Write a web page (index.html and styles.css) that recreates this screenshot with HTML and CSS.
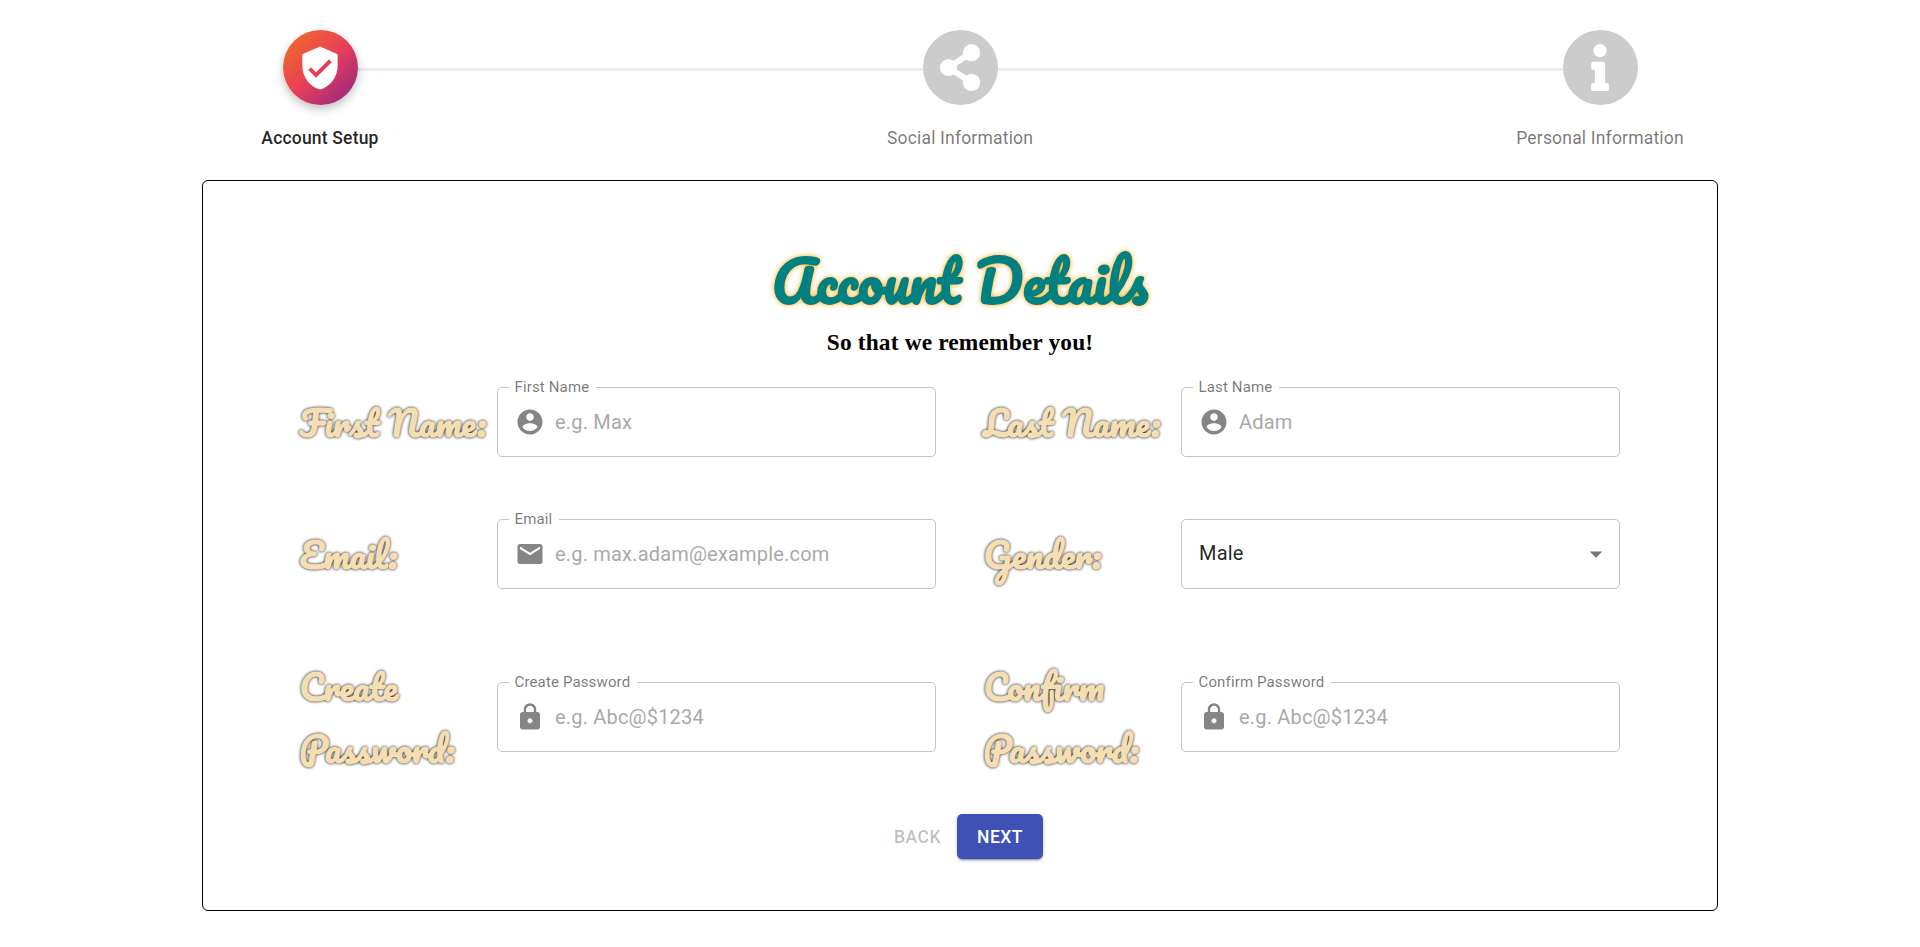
FILE: index.html
```html
<!DOCTYPE html>
<html lang="en">
<head>
<meta charset="utf-8">
<title>Account Setup</title>
<link rel="stylesheet" href="styles.css">
</head>
<body>
<svg class="defs" aria-hidden="true">
  <symbol id="user" viewBox="0 0 24 24"><path d="M12 2C6.48 2 2 6.48 2 12s4.48 10 10 10 10-4.48 10-10S17.52 2 12 2zm0 3c1.66 0 3 1.34 3 3s-1.34 3-3 3-3-1.34-3-3 1.34-3 3-3zm0 14.2c-2.5 0-4.71-1.28-6-3.22.03-1.99 4-3.08 6-3.08 1.99 0 5.97 1.09 6 3.08-1.29 1.94-3.5 3.22-6 3.22z"/></symbol>
  <symbol id="mail" viewBox="0 0 24 24"><path d="M20 4H4c-1.1 0-1.99.9-1.99 2L2 18c0 1.1.9 2 2 2h16c1.1 0 2-.9 2-2V6c0-1.1-.9-2-2-2zm0 4l-8 5-8-5V6l8 5 8-5v2z"/></symbol>
  <symbol id="lock" viewBox="0 0 24 24"><path d="M18 8h-1V6c0-2.76-2.24-5-5-5S7 3.24 7 6v2H6c-1.1 0-2 .9-2 2v10c0 1.1.9 2 2 2h12c1.1 0 2-.9 2-2V10c0-1.1-.9-2-2-2zm-6 9c-1.1 0-2-.9-2-2s.9-2 2-2 2 .9 2 2-.9 2-2 2zm3.1-9H8.9V6c0-1.71 1.39-3.1 3.1-3.1 1.71 0 3.1 1.39 3.1 3.1v2z"/></symbol>
</svg>

<nav class="stepper">
  <div class="step active">
    <span class="bubble"><svg class="shield" viewBox="0 0 24 24"><path d="M12 1L3 5v6c0 5.550 3.840 10.740 9 12 5.160-1.260 9-6.450 9-12V5l-9-4zm-2 16l-4-4 1.410-1.410L10 14.170l6.590-6.590L18 9l-8 8z"/></svg></span>
    <span class="step-name">Account Setup</span>
  </div>
  <div class="step">
    <span class="bubble"><svg class="share" viewBox="0 0 40 47"><path d="M8.500 23.500L31.500 8.500M8.500 23.500L31.500 38.500" fill="none" stroke="#fff" stroke-width="6"/><circle cx="8.500" cy="23.500" r="8.600"/><circle cx="31.500" cy="8.700" r="8.600"/><circle cx="31.500" cy="38.300" r="8.600"/></svg></span>
    <span class="step-name">Social Information</span>
  </div>
  <div class="step">
    <span class="bubble"><svg class="info" viewBox="0 0 192 512"><path d="M20 424.229h20V279.771H20c-11.046 0-20-8.954-20-20V212c0-11.046 8.954-20 20-20h112c11.046 0 20 8.954 20 20v212.229h20c11.046 0 20 8.954 20 20V492c0 11.046-8.954 20-20 20H20c-11.046 0-20-8.954-20-20v-47.771c0-11.046 8.954-20 20-20zM96 0C56.235 0 24 32.235 24 72s32.235 72 72 72 72-32.235 72-72S135.764 0 96 0z"/></svg></span>
    <span class="step-name">Personal Information</span>
  </div>
</nav>

<main class="card">
  <h1 class="title">Account Details</h1>
  <h2 class="subtitle">So that we remember you!</h2>

  <form class="form">
    <span class="caption">First Name:</span>
    <fieldset class="field"><legend>First Name</legend><svg class="icon"><use href="#user"/></svg><span class="hint">e.g. Max</span></fieldset>
    <span class="caption">Last Name:</span>
    <fieldset class="field"><legend>Last Name</legend><svg class="icon"><use href="#user"/></svg><span class="hint">Adam</span></fieldset>

    <span class="caption">Email:</span>
    <fieldset class="field"><legend>Email</legend><svg class="icon"><use href="#mail"/></svg><span class="hint">e.g. max.adam@example.com</span></fieldset>
    <span class="caption">Gender:</span>
    <div class="field select"><span class="value">Male</span><svg class="icon arrow" viewBox="0 0 24 24"><path d="M7 10l5 5 5-5z"/></svg></div>

    <span class="caption">Create<br>Password:</span>
    <fieldset class="field"><legend>Create Password</legend><svg class="icon"><use href="#lock"/></svg><span class="hint">e.g. Abc@$1234</span></fieldset>
    <span class="caption">Confirm<br>Password:</span>
    <fieldset class="field"><legend>Confirm Password</legend><svg class="icon"><use href="#lock"/></svg><span class="hint">e.g. Abc@$1234</span></fieldset>
  </form>

  <div class="actions">
    <button class="button" disabled>BACK</button>
    <button class="button primary">NEXT</button>
  </div>
</main>
</body>
</html>
```

FILE: styles.css
```css
* { box-sizing: border-box; }
body { margin: 0; background: #fff; font-family: Roboto, sans-serif; height: 947px; overflow: hidden; }
.defs { display: none; }

.stepper { display: flex; width: 1920px; padding-top: 30px; height: 180px; }
.step { flex: 1; display: flex; flex-direction: column; align-items: center; position: relative; }
.step + .step::before {
  content: ""; position: absolute; top: 38px; height: 3px;
  left: calc(-50% + 37px); right: calc(50% + 37px); background: #eaeaf0;
}
.bubble { width: 75px; height: 75px; border-radius: 50%; background: #ccc; display: flex; align-items: center; justify-content: center; position: relative; left: .5px; z-index: 1; }
.bubble svg { fill: #fff; }
.active .bubble {
  background: linear-gradient(136deg, rgb(242,113,33) 0%, rgb(233,64,87) 50%, rgb(138,35,135) 100%);
  box-shadow: 0 4px 10px 0 rgba(0,0,0,.25);
}
.bubble .shield { width: 52px; height: 52px; padding: 2.5px; margin-right: 1px; }
.share { width: 40px; height: 47px; margin-right: 1px; }
.info { width: 18px; height: 47px; margin-right: 1px; }
.step-name { margin-top: 21px; font-size: 17.5px; line-height: 25px; letter-spacing: .01071em; color: rgba(0,0,0,.54); }
.active .step-name { font-weight: 500; color: rgba(0,0,0,.87); }

.card { width: 1516px; height: 731px; margin-left: 202px; border: 1px solid #000; border-radius: 6px; padding: 60px 98px 0; }
.title, .caption { font-family: Pacifico, cursive; font-weight: bold; }
.title { margin: 0; text-align: center; font-size: 56.4px; line-height: 80px; color: teal; text-shadow: 0 0 5px orange; }
.subtitle { margin: 7px 0 0; text-align: center; font: bold 23.4px/28px "Liberation Serif", serif; letter-spacing: .15px; color: #000; }

.form { display: grid; grid-template-columns: 196px 439px 245px 439px; grid-template-rows: 70px 70px 126px; row-gap: 62px; padding-top: 31px; }
.caption { align-self: center; padding-top: 2px; margin-left: -1.5px; font-size: 35px; line-height: 61.5px; white-space: nowrap; color: wheat; text-shadow: 0 0 3px #000; }
.caption:nth-child(4n + 3) { padding-left: 49px; }
.caption:nth-child(n + 9) { padding-top: 7px; }

.field { margin: 0; height: 70px; align-self: start; position: relative; border: 1px solid #c4c4c4; border-radius: 5px; padding: 0 17px; display: flex; align-items: center; }
.field:nth-child(n + 9) { margin-top: 31px; }
.field legend { margin-left: -6.5px; padding: 0 6.5px 0 6px; font-size: 15px; height: 1px; line-height: 1px; letter-spacing: .00938em; color: rgba(0,0,0,.54); }
.icon { width: 30px; height: 30px; fill: #858585; flex: none; }
.hint { margin-left: 10px; font-size: 20px; letter-spacing: .00938em; color: #a9a9a9; }
.value { padding-bottom: 2px; font-size: 20px; letter-spacing: .00938em; color: rgba(0,0,0,.87); flex: 1; }
.arrow { margin-right: -9px; fill: #757575; }

.actions { display: flex; justify-content: center; margin-top: 37px; padding-right: 3px; }
.button { height: 45px; min-width: 80px; padding: 0 20px; border: 0; border-radius: 5px; background: none; font: 500 17.5px/30px Roboto, sans-serif; letter-spacing: .02857em; color: rgba(0,0,0,.26); }
.primary { margin-left: -4px; background: #3f51b5; color: #fff; box-shadow: 0 3px 1px -2px rgba(0,0,0,.2), 0 2px 2px 0 rgba(0,0,0,.14), 0 1px 5px 0 rgba(0,0,0,.12); }
```
